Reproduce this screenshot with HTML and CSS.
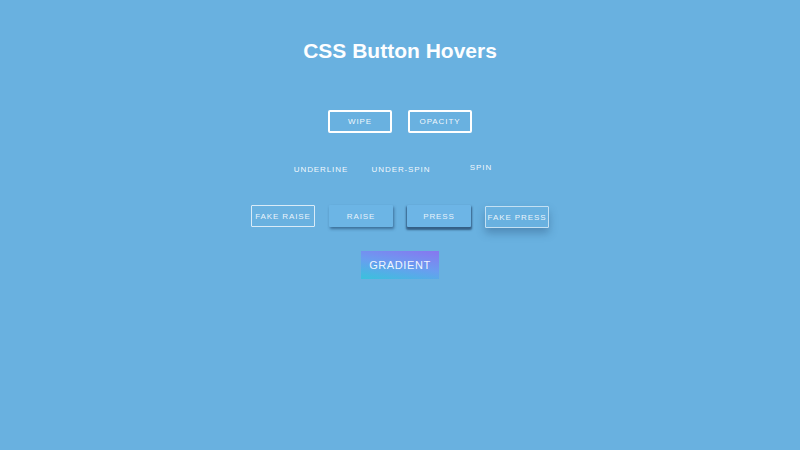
FILE: index.html
```html
<!DOCTYPE html>
<html lang="en">
<head>
<meta charset="utf-8">
<title>CSS Button Hovers</title>
<link rel="stylesheet" href="styles.css">
</head>
<body>
  <main class="page">
    <h1 class="title">CSS Button Hovers</h1>

    <div class="row row-boxed">
      <button class="btn btn-outline">Wipe</button>
      <button class="btn btn-outline">Opacity</button>
    </div>

    <div class="row row-plain">
      <button class="btn btn-text">Underline</button>
      <button class="btn btn-text">Under-spin</button>
      <button class="btn btn-text btn-spin">Spin</button>
    </div>

    <div class="row row-depth">
      <button class="btn btn-fake-raise">Fake raise</button>
      <button class="btn btn-raise">Raise</button>
      <button class="btn btn-press">Press</button>
      <button class="btn btn-fake-press">Fake press</button>
    </div>

    <div class="row row-gradient">
      <button class="btn btn-gradient">Gradient</button>
    </div>
  </main>
</body>
</html>
```

FILE: styles.css
```css
html, body {
  margin: 0;
  padding: 0;
}

body {
  background: #69b1e0;
  font-family: "Liberation Sans", Arial, sans-serif;
  color: #fff;
  width: 800px;
  height: 450px;
  overflow: hidden;
}

.page {
  display: flex;
  flex-direction: column;
  align-items: center;
}

.title {
  margin: 38px 0 0;
  font-size: 21px;
  font-weight: bold;
  letter-spacing: 0;
  line-height: 26px;
  color: #fdfeff;
}

.row {
  display: flex;
  justify-content: center;
}

.btn {
  font-family: inherit;
  font-size: 8px;
  letter-spacing: 0.9px;
  text-transform: uppercase;
  white-space: nowrap;
  color: rgba(255, 255, 255, 0.92);
  background: transparent;
  border: 0;
  padding: 0;
  margin: 0;
  cursor: pointer;
}

/* boxed buttons with a white outline */
.row-boxed {
  margin-top: 46px;
  gap: 16px;
}

.btn-outline {
  width: 64px;
  height: 23px;
  border: 2px solid #fff;
  border-radius: 2px;
}

/* text-only buttons */
.row-plain {
  margin-top: 29px;
  margin-left: 2px;
}

.btn-text {
  width: 80px;
  height: 16px;
  line-height: 16px;
}

.btn-spin {
  position: relative;
  top: -2px;
}

/* raise / press family */
.row-depth {
  margin-top: 27px;
  gap: 14px;
}

.row-depth .btn {
  width: 64px;
  height: 22px;
  border-radius: 1px;
}

.btn-fake-raise {
  border: 1px solid rgba(255, 255, 255, 0.75) !important;
  color: rgba(255, 255, 255, 0.88);
}

.btn-raise {
  background: #6cb5e5 !important;
  color: rgba(255, 255, 255, 0.85);
  box-shadow: 1px 2px 3px rgba(35, 75, 115, 0.65);
}

.btn-press {
  background: #6db5e6 !important;
  color: rgba(255, 255, 255, 0.85);
  box-shadow: 0 2px 2px 1px rgba(30, 60, 95, 0.7);
}

.btn-fake-press {
  margin-top: 1px;
  border: 1px solid rgba(255, 255, 255, 0.6) !important;
  color: rgba(255, 255, 255, 0.88);
  box-shadow: 0 5px 8px rgba(40, 80, 120, 0.4);
}

/* gradient button */
.row-gradient {
  margin-top: 23px;
}

.btn-gradient {
  width: 78px;
  height: 28px;
  font-size: 11px;
  letter-spacing: 0.6px;
  color: rgba(255, 255, 255, 0.92);
  background: linear-gradient(10deg, #39c2dc 0%, #6a9df0 50%, #8876f0 100%);
}
```
